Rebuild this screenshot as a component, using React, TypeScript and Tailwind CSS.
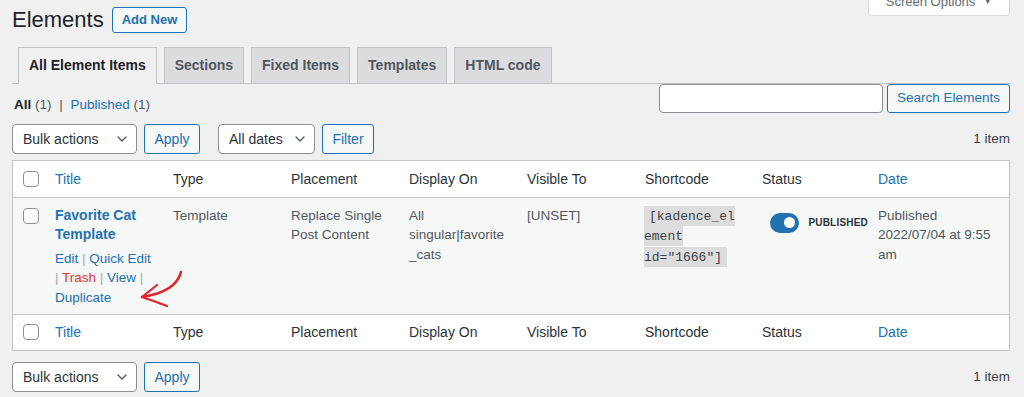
import { ChevronDown } from "lucide-react";

const cols = [
  { label: "Title", link: true },
  { label: "Type" },
  { label: "Placement" },
  { label: "Display On" },
  { label: "Visible To" },
  { label: "Shortcode" },
  { label: "Status" },
  { label: "Date", link: true },
];

function Checkbox() {
  return <span className="block h-4 w-4 rounded-[4px] border border-[#8c8f94] bg-white" />;
}

function Select({ label, width }: { label: string; width: string }) {
  return (
    <div
      className={`${width} flex h-[30px] items-center justify-between rounded-[4px] border border-[#8c8f94] bg-white pl-[10px] pr-[6px] text-[14px] text-[#2c3338]`}
    >
      <span>{label}</span>
      <ChevronDown className="h-4 w-4 text-[#50575e]" strokeWidth={2} />
    </div>
  );
}

function Button({ children, width }: { children: React.ReactNode; width: string }) {
  return (
    <button
      className={`${width} h-[30px] rounded-[3px] border border-[#2271b1] bg-[#f6f7f7] text-[14px] text-[#2271b1]`}
    >
      {children}
    </button>
  );
}

function HeadRow({ top }: { top?: boolean }) {
  return (
    <tr className={top ? "border-b border-[#c3c4c7]" : "border-t border-[#c3c4c7]"}>
      <th className="h-[36px] pl-[10px] align-middle">
        <Checkbox />
      </th>
      {cols.map((c) => (
        <th
          key={c.label}
          className={`px-[10px] text-left align-middle text-[14px] font-normal leading-5 ${
            c.link ? "text-[#2271b1]" : "text-[#2c3338]"
          }`}
        >
          {c.label}
        </th>
      ))}
    </tr>
  );
}

export default function App() {
  const sep = <span className="text-[#a7aaad]">|</span>;

  return (
    <div className="relative min-h-[397px] bg-[#f0f0f1] pl-[12px] pr-[14px] font-['Liberation_Sans',Arial,sans-serif] text-[#3c434a]">
      {/* Header */}
      <div className="flex items-start justify-between">
        <div className="mt-[7px] flex items-center gap-[8px]">
          <h1 className="text-[22px] leading-[26px] font-normal text-[#1d2327]">Elements</h1>
          <button className="h-[26px] rounded-[3px] border border-[#2271b1] bg-[#f6f7f7] px-[9px] text-[13px] font-semibold text-[#2271b1]">
            Add New
          </button>
        </div>
        <div className="-mt-[11px] flex h-[27px] w-[142px] items-center justify-center gap-2 rounded-b-[4px] border border-t-0 border-[#dcdcde] bg-white text-[13px] text-[#646970]">
          Screen Options <span className="text-[9px]">▼</span>
        </div>
      </div>

      {/* Tabs */}
      <div className="mt-[14px] flex gap-[7px] border-b border-[#c3c4c7] pl-[6px]">
        {["All Element Items", "Sections", "Fixed Items", "Templates", "HTML code"].map((t, i) => (
          <div
            key={t}
            className={`-mb-px flex h-[37px] items-center border border-[#c3c4c7] px-[10px] text-[14px] font-bold ${
              i === 0
                ? "border-b-[#f0f0f1] bg-[#f0f0f1] text-[#1d2327]"
                : "bg-[#dcdcde] text-[#50575e]"
            }`}
          >
            {t}
          </div>
        ))}
      </div>

      {/* Views + search */}
      <div className="flex items-start justify-between">
        <div className="mt-[11px] pl-[2px] text-[13.5px] leading-5 text-[#50575e]">
          <span className="font-bold text-[#1d2327]">All</span> (1) <span className="mx-[4px]">|</span>{" "}
          <span className="text-[#2271b1]">Published</span> (1)
        </div>
        <div className="flex gap-[4px]">
          <div className="h-[29px] w-[224px] rounded-[4px] border border-[#8c8f94] bg-white" />
          <button className="h-[29px] w-[123px] rounded-[3px] border border-[#2271b1] bg-[#f6f7f7] text-[13.5px] text-[#2271b1]">
            Search Elements
          </button>
        </div>
      </div>

      {/* Top tablenav */}
      <div className="mt-[9px] flex items-center">
        <Select label="Bulk actions" width="w-[125px]" />
        <div className="ml-[7px]">
          <Button width="w-[56px]">Apply</Button>
        </div>
        <div className="ml-[18px]">
          <Select label="All dates" width="w-[97px]" />
        </div>
        <div className="ml-[7px]">
          <Button width="w-[52px]">Filter</Button>
        </div>
        <div className="ml-auto text-[13.5px] text-[#3c434a]">1 item</div>
      </div>

      {/* Table */}
      <div className="mt-[6px] border border-[#c3c4c7] bg-white">
        <table className="w-full table-fixed border-collapse">
          <colgroup>
            <col className="w-[32px]" />
            <col className="w-[118px]" />
            <col className="w-[118px]" />
            <col className="w-[118px]" />
            <col className="w-[118px]" />
            <col className="w-[118px]" />
            <col className="w-[117px]" />
            <col className="w-[116px]" />
            <col />
          </colgroup>
          <thead>
            <HeadRow top />
          </thead>
          <tbody className="text-[13.5px] leading-[19.5px] text-[#50575e]">
            <tr className="h-[117px] bg-[#f6f7f7] align-top">
              <td className="pl-[10px] pt-[10px]">
                <Checkbox />
              </td>
              <td className="px-[10px] pt-[8px]">
                <div className="text-[14px] font-bold text-[#2271b1]">
                  Favorite Cat
                  <br />
                  Template
                </div>
                <div className="mt-[4px] whitespace-nowrap text-[#2271b1]">
                  <div>
                    Edit {sep} Quick Edit
                  </div>
                  <div>
                    {sep} <span className="text-[#d63638]">Trash</span> {sep} View {sep}
                  </div>
                  <div>Duplicate</div>
                </div>
              </td>
              <td className="px-[10px] pt-[8px]">Template</td>
              <td className="px-[10px] pt-[8px]">
                Replace Single
                <br />
                Post Content
              </td>
              <td className="px-[10px] pt-[8px]">
                All
                <br />
                singular|favorite
                <br />
                _cats
              </td>
              <td className="px-[10px] pt-[8px]">[UNSET]</td>
              <td className="pl-[9px] pr-[10px] pt-[8px]">
                <code className="bg-[#0000001a] px-[5px] pt-[3px] pb-[2px] font-['Liberation_Mono',monospace] text-[13px] text-[#3c434a]">
                  [kadence_el
                  <br />
                  ement
                  <br />
                  id="1666"]
                </code>
              </td>
              <td className="overflow-visible pl-[18px] pt-[15px]">
                <div className="flex items-center gap-[9px] whitespace-nowrap">
                  <span className="flex h-[20px] w-[40px] items-center justify-end rounded-full bg-[#2271b1] pr-[4px]">
                    <span className="h-[11px] w-[11px] rounded-full bg-white" />
                  </span>
                  <span className="text-[10px] font-bold tracking-[0.2px] text-[#2c3338]">PUBLISHED</span>
                </div>
              </td>
              <td className="px-[10px] pt-[8px]">
                Published
                <br />
                2022/07/04 at 9:55 am
              </td>
            </tr>
          </tbody>
          <tfoot>
            <HeadRow />
          </tfoot>
        </table>
      </div>

      {/* Bottom tablenav */}
      <div className="mt-[11px] flex items-center">
        <Select label="Bulk actions" width="w-[125px]" />
        <div className="ml-[7px]">
          <Button width="w-[56px]">Apply</Button>
        </div>
        <div className="ml-auto text-[13.5px] text-[#3c434a]">1 item</div>
      </div>

      {/* annotation arrow */}
      <svg
        className="pointer-events-none absolute left-[130px] top-[265px]"
        width="60"
        height="50"
        viewBox="0 0 60 50"
        fill="none"
        stroke="#e3232b"
        strokeLinecap="round"
        strokeLinejoin="round"
      >
        <path d="M51 7 C48 19 38 28 12 32" strokeWidth="2.6" />
        <path d="M12 32 L27 20" strokeWidth="2.2" />
        <path d="M12 32 Q24 36 37 41" strokeWidth="2.2" />
      </svg>
    </div>
  );
}
